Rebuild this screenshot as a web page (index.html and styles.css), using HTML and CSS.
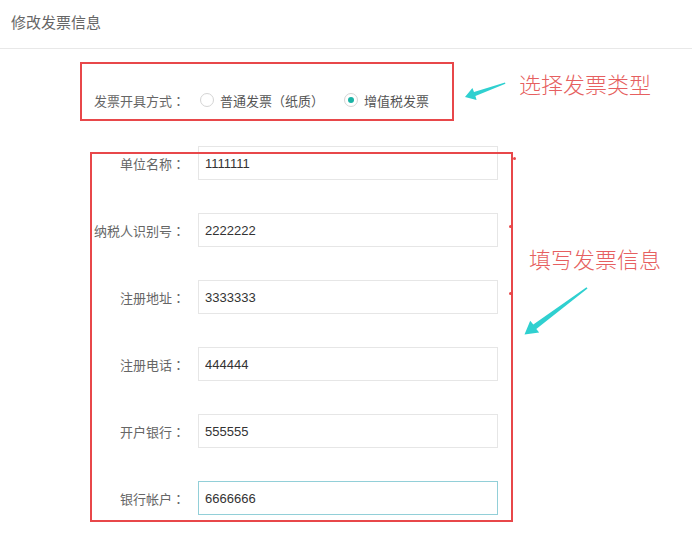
FILE: index.html
```html
<!DOCTYPE html>
<html lang="zh-CN">
<head>
<meta charset="utf-8">
<title>修改发票信息</title>
<link rel="stylesheet" href="styles.css">
</head>
<body>
<div class="page">
  <header class="hd">修改发票信息</header>
  <form class="form">
    <div class="row radio-row">
      <span class="lbl">发票开具方式<span class="punc" lang="zh-TW">：</span></span>
      <div class="opts">
        <span class="opt"><span class="radio"></span><span>普通发票<span class="punc" lang="zh-TW">（</span>纸质<span class="punc" lang="zh-TW">）</span></span></span>
        <span class="opt"><span class="radio checked"></span><span>增值税发票</span></span>
      </div>
    </div>
    <div class="fields">
      <div class="row"><label class="lbl">单位名称<span class="punc" lang="zh-TW">：</span></label><input class="ipt" value="1111111"></div>
      <div class="row"><label class="lbl">纳税人识别号<span class="punc" lang="zh-TW">：</span></label><input class="ipt" value="2222222"></div>
      <div class="row"><label class="lbl">注册地址<span class="punc" lang="zh-TW">：</span></label><input class="ipt" value="3333333"></div>
      <div class="row"><label class="lbl">注册电话<span class="punc" lang="zh-TW">：</span></label><input class="ipt" value="444444"></div>
      <div class="row"><label class="lbl">开户银行<span class="punc" lang="zh-TW">：</span></label><input class="ipt" value="555555"></div>
      <div class="row"><label class="lbl">银行帐户<span class="punc" lang="zh-TW">：</span></label><input class="ipt focus" value="6666666"></div>
    </div>
  </form>

  <div class="mark box1"></div>
  <div class="mark box2"></div>
  <span class="tick t1"></span>
  <span class="tick t2"></span>
  <span class="tick t3"></span>
  <svg class="arrows" width="692" height="535" viewBox="0 0 692 535">
    <polygon fill="#2fd0d0" points="465,97 472.4,88 474,92 505,82.4 505.4,83.8 475.4,96 476.6,100"/>
    <polygon fill="#2fd0d0" points="524.5,334.5 530.2,320.8 533.3,324.6 586.5,287.3 587.5,288.6 536.3,329 539.2,332.6"/>
  </svg>
  <div class="note n1">选择发票类型</div>
  <div class="note n2">填写发票信息</div>
</div>
</body>
</html>
```
FILE: styles.css
```css
* { box-sizing: border-box; }
html, body { margin: 0; padding: 0; background: #fff; }
body {
  font-family: "Liberation Sans", "Noto Sans CJK SC", sans-serif;
  color: #666;
  text-spacing-trim: space-all;
}
.page {
  position: relative;
  width: 692px;
  height: 535px;
  overflow: hidden;
}
.hd {
  height: 49px;
  padding-left: 11px;
  line-height: 46px;
  font-size: 15px;
  color: #666;
  border-bottom: 1px solid #e8e8e8;
}
.form {
  padding-top: 34px;
}
.row {
  display: grid;
  grid-template-columns: 185px 300px;
  column-gap: 13px;
  align-items: center;
  height: 34px;
}
.radio-row { margin-bottom: 29px; }
.fields {
  display: flex;
  flex-direction: column;
  gap: 33px;
}
.lbl {
  text-align: right;
  font-size: 13px;
  color: #666;
  white-space: nowrap;
}
.punc {
  font-family: "Noto Sans CJK TC", "Noto Sans CJK SC", sans-serif;
}
.opts {
  display: flex;
  align-items: center;
  font-size: 13px;
  color: #555;
  padding-left: 2px;
  gap: 20px;
}
.opt {
  display: flex;
  align-items: center;
  gap: 6px;
  white-space: nowrap;
}
.radio {
  width: 14px;
  height: 14px;
  border: 1px solid #d4d4d4;
  border-radius: 50%;
  display: flex;
  align-items: center;
  justify-content: center;
  background: #fff;
}
.radio.checked::after {
  content: "";
  width: 6px;
  height: 6px;
  border-radius: 50%;
  background: #1bb3a5;
}
.ipt {
  width: 300px;
  height: 34px;
  border: 1px solid #e6e6e6;
  padding: 0 6px;
  font-family: "Liberation Sans", "Noto Sans CJK SC", sans-serif;
  font-size: 13px;
  color: #333;
  outline: none;
  background: #fff;
}
.ipt.focus { border-color: #92cfd8; }

.mark {
  position: absolute;
  border: 2px solid #e8474a;
}
.box1 { left: 80px; top: 62px; width: 374px; height: 59px; }
.box2 { left: 90px; top: 152px; width: 423px; height: 370px; }
.tick {
  position: absolute;
  width: 3px;
  height: 3px;
  background: #e8474a;
  border-radius: 50%;
}
.t1 { left: 513px; top: 157px; }
.t2 { left: 509px; top: 225px; }
.t3 { left: 509px; top: 292px; }
.arrows {
  position: absolute;
  left: 0;
  top: 0;
}
.note {
  position: absolute;
  font-family: "Noto Sans CJK SC", sans-serif;
  font-size: 22px;
  font-weight: 300;
  line-height: 22px;
  color: #e65f60;
  white-space: nowrap;
}
.n1 { left: 519px; top: 72px; }
.n2 { left: 529px; top: 247px; }
```
